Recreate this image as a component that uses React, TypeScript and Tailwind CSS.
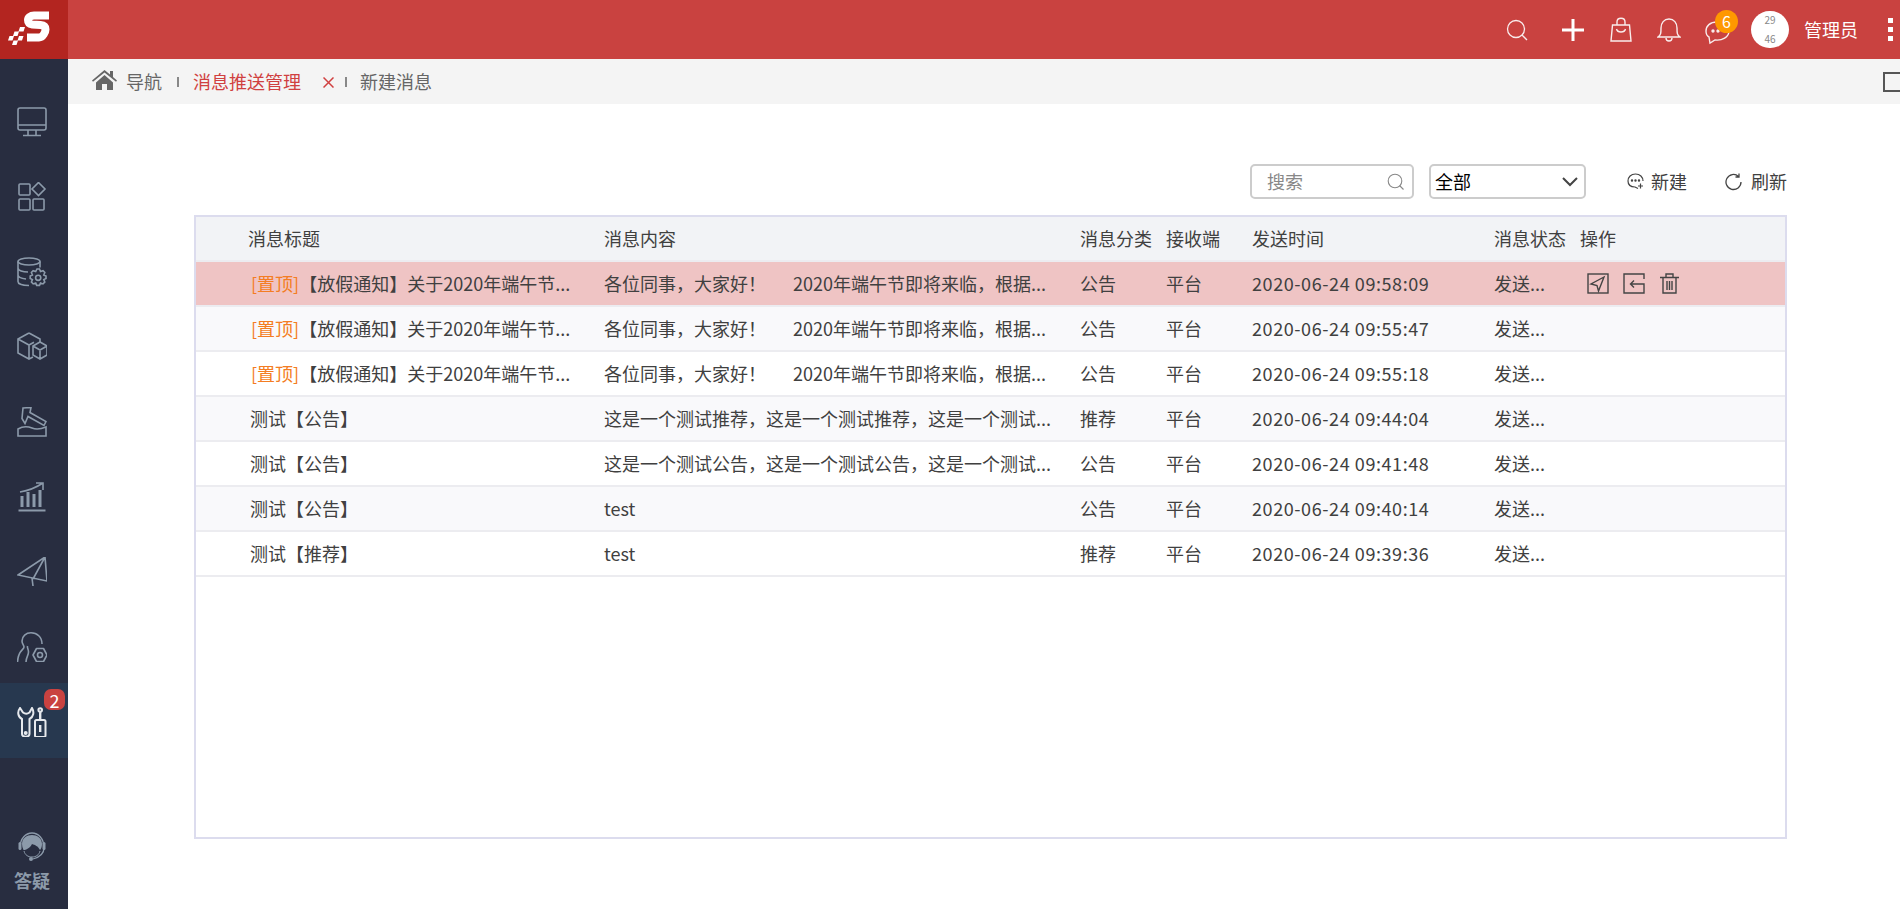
import React from "react";

const notice = "各位同事\uFF0C大家好\uFF01";
const holiday = "2020年端午节即将来临\uFF0C根据...";
const rows = [
  { top: true, title: "【放假通知】关于2020年端午节...", a: notice, b: holiday, cat: "公告", time: "2020-06-24 09:58:09", active: true },
  { top: true, title: "【放假通知】关于2020年端午节...", a: notice, b: holiday, cat: "公告", time: "2020-06-24 09:55:47" },
  { top: true, title: "【放假通知】关于2020年端午节...", a: notice, b: holiday, cat: "公告", time: "2020-06-24 09:55:18" },
  { title: "测试【公告】", a: "这是一个测试推荐\uFF0C这是一个测试推荐\uFF0C这是一个测试...", cat: "推荐", time: "2020-06-24 09:44:04" },
  { title: "测试【公告】", a: "这是一个测试公告\uFF0C这是一个测试公告\uFF0C这是一个测试...", cat: "公告", time: "2020-06-24 09:41:48" },
  { title: "测试【公告】", a: "test", cat: "公告", time: "2020-06-24 09:40:14" },
  { title: "测试【推荐】", a: "test", cat: "推荐", time: "2020-06-24 09:39:36" },
];

const S = ({ children, w = 30, h = 30, vb = "0 0 30 30", sw = 1.6, className = "" }: any) => (
  <svg width={w} height={h} viewBox={vb} fill="none" stroke="currentColor" strokeWidth={sw} className={className}>
    {children}
  </svg>
);

const sideIcons = [
  <S key="m"><rect x="1" y="1" width="28" height="22" rx="2" /><path d="M1 18h28M11 23v5M19 23v5M6 28.500h18" /></S>,
  <S key="a"><rect x="2" y="2" width="11" height="11" rx="1" /><rect x="2" y="17" width="11" height="11" rx="1" /><rect x="16" y="17" width="11" height="11" rx="1" /><path d="M21.500 0.500l6.500 6.500-6.500 6.500-6.500-6.500z" /></S>,
  <S key="d"><ellipse cx="12" cy="4.500" rx="11" ry="3.500" /><path d="M1 4.500v20c0 2.500 5 4 11 4M1 11c0 2.500 5 4 10 4M1 18c0 2 4 3.500 8 4M23 4.500v6" /><path d="M20 12l2.500 0 1 2.500 2.500-.8 1.800 1.800-1 2.500 2.200 1v2.600l-2.200 1 1 2.500-1.800 1.800-2.500-.8-1 2.300h-2.800l-1-2.300-2.500.8-1.800-1.800 1-2.500-2.200-1v-2.600l2.200-1-1-2.500 1.800-1.800 2.500.8z" /><circle cx="21.200" cy="20.800" r="2.600" /></S>,
  <S key="b"><path d="M12 1l11 6v3M12 1L1 7v14l11 6 4-2M1 7l11 6 5-2.700M12 13v14" /><path d="M23 10l7 4v9l-7 4-7-4v-9zM16 14l7 4 7-4M23 18v9" /></S>,
  <S key="h"><path d="M1 22c5-3 9-3 14-1s9 1 14-1v9H1z" /><path d="M6 1l8-.5-1 5 16 9-2 4-16-9-3 7-3-5z" /></S>,
  <S key="c"><path d="M3 10c6-1 14-3 23-9M19 1h7v7" /><path d="M1.500 28.500h27" strokeWidth="2" /><path d="M5 14v11M11 10v15M17 12v13M23 8v17" strokeWidth="3" /></S>,
  <S key="p"><path d="M1 18L28 0l2 24-29-6zM28 0L16 22M15 21l1 8" /></S>,
  <S key="u">
    <path d="M25 12C25 5 20 .8 14 .8 9 .8 5 4 5 9c0 3 2 4 2 6 0 3-6 3-6.500 15" />
    <path d="M9 30c0-5 2.500-6 2.500-10 0-3-1.500-4-1-6" />
    <path d="M19.500 16.500h7l3.500 6.500-3.500 6.500h-7L16 23z" strokeLinejoin="round" />
    <circle cx="23" cy="23" r="2.500" />
  </S>,
];

function Col({ children, className = "" }: any) {
  return <div className={`whitespace-nowrap ${className}`}>{children}</div>;
}

const cols = "grid grid-cols-[408px_476px_86px_86px_242px_86px_1fr] items-center";

export default function App() {
  return (
    <div className="flex flex-col h-[909px] w-[1900px] overflow-hidden bg-white font-['Noto_Sans_CJK_SC','Microsoft_YaHei',sans-serif] text-[18px] text-[#404040]">
      <header className="flex h-[59px] shrink-0 items-stretch bg-[#c94240]">
        <div className="flex w-[68px] items-center justify-center bg-[#b32520]">
          <svg width="68" height="59" viewBox="0 0 68 59" className="shrink-0">
            <path d="M49 15.500H34c-3.500 0-6 2-6 4.500s1.500 4 4.500 4.500l8 .6c3.500.3 5 2 5 4.400s-2.500 8-6.500 8H27" fill="none" stroke="#fff" strokeWidth="8" />
            <path d="M20 27h5l-1.500 4.500h-5zM14.500 31.500h4.500l-1.500 4.500H13zM9.500 36h4.500l-1.500 4.500H8zM19 36h4.500L22 40.500h-4.500zM13.500 40.500h4.500l-1.500 4.500H12z" fill="#fff" />
          </svg>
        </div>
        <div className="flex flex-1 items-center justify-end text-white">
          <S w={22} h={22} vb="0 0 22 22" sw={1.3} className="mr-[34px] opacity-90"><circle cx="10" cy="10" r="8.500" /><path d="M16 16l5 5" /></S>
          <S w={22} h={22} vb="0 0 22 22" sw={3} className="mr-[26px]"><path d="M0 11h22M11 0v22" /></S>
          <S w={22} h={25} vb="0 0 22 25" sw={1.4} className="mr-[25px] opacity-90"><path d="M2.500 8h17l1.500 16H1zM7 8V5c0-5 8-5 8 0v3M6.500 12c1 4 8 4 9 0" /></S>
          <S w={24} h={25} vb="0 0 24 25" sw={1.4} className="mr-[24px] opacity-90"><path d="M1 20c3-2 3-4 3-9 0-5 3-9 8-9s8 4 8 9c0 5 0 7 3 9zM9 21c0 4 6 4 6 0" /></S>
          <div className="relative mr-[21px] h-[26px] w-[25px]">
            <S w={25} h={26} vb="0 0 25 26" sw={1.4} className="absolute left-0 top-[3px] opacity-90"><path d="M12 2C5 2 1 6 1 11c0 3 1 5 3 6l1 6 5-3c7 1 14-3 14-9S18 2 12 2z" /><circle cx="8" cy="11" r="1" fill="currentColor" /><circle cx="13" cy="11" r="1" fill="currentColor" /></S>
            <div className="absolute left-[10px] top-[-7px] flex h-[23px] w-[23px] items-center justify-center rounded-full bg-[#ff9800] text-[16px] leading-none text-white">6</div>
          </div>
          <div className="mr-[15px] flex h-[37px] w-[38px] flex-col items-center justify-between rounded-full bg-white py-[4px] text-[10px] leading-none text-[#888]">
            <span>29</span>
            <span>46</span>
          </div>
          <span className="mb-[2px] mr-[30px] leading-none">管理员</span>
          <div className="mr-[7px] flex flex-col gap-[4px]">
            <i className="block size-[5px] bg-white" />
            <i className="block size-[5px] bg-white" />
            <i className="block size-[5px] bg-white" />
          </div>
        </div>
      </header>

      <div className="flex min-h-0 flex-1">
        <aside className="flex w-[68px] shrink-0 flex-col bg-[#282d40] pt-[24px] text-[#8c9aaa]">
          {sideIcons.map((ic, i) => (
            <div key={i} className="flex h-[75px] items-center justify-center pr-[4px] pt-[2px]">{ic}</div>
          ))}
          <div className="relative flex h-[75px] items-center justify-center bg-[#27384f] pr-[4px] pt-[2px] text-[#e6e9ed]">
            <S sw={2}>
              <path d="M3 1C0 5 1 10 5 12v15c0 3.500 7.500 3.500 7.500 0V12c4-2 5-7 2.500-11l-2.500 4.500c-2 1.500-4.500 1.500-6.500 0z" />
              <circle cx="8.700" cy="26" r="1" />
              <rect x="18" y="13" width="10.500" height="17" rx="1.500" />
              <path d="M23.200 5v8M23.200 18v7" strokeWidth="2.400" />
              <circle cx="23.200" cy="3" r="1.800" />
            </S>
            <div className="absolute left-[44px] top-[6px] flex h-[21px] w-[21px] items-center justify-center rounded-[7px] bg-[#c94240] text-[18px] leading-none text-white">2</div>
          </div>
          <div className="mt-auto flex flex-col items-center pb-[20px] pr-[4px]">
            <svg width="28" height="30" viewBox="0 0 28 30" fill="#8c9aaa">
              <path d="M2 17C2-3 26-3 26 17c0 6-4 9-11 11" fill="none" stroke="#8c9aaa" strokeWidth="1.300" />
              <path d="M4 13C4 1 24 1 24 13c0 3-1 5-2 6-2-4-5-5-8-6-2 4-6 6-8.500 6C4.500 17 4 15 4 13z" />
              <rect x="0.500" y="11" width="3" height="8" rx="1.500" />
              <rect x="24.500" y="11" width="3" height="8" rx="1.500" />
              <path d="M6 20c1 4 4 6 8 6s7-2 8-6" fill="none" stroke="#8c9aaa" strokeWidth="1" />
              <circle cx="13" cy="28" r="2" />
            </svg>
            <span className="mt-[10px] font-bold leading-none text-[#8c9aaa]">答疑</span>
          </div>
        </aside>

        <main className="min-w-0 flex-1">
          <nav className="flex h-[45px] items-center bg-[#f4f4f4] pl-[24px] text-[#666]">
            <svg width="25" height="20" viewBox="0 0 25 20" fill="#666" className="mb-[4px]">
              <path d="M12.500 0L0 10.500l1 1.200L12.500 2.500 24 11.700l1-1.200-4-3.500V1h-3v3.500z" />
              <path d="M4 12.500L12.500 5 21 12.500V20h-6v-6h-5v6H4z" />
            </svg>
            <span className="mb-[2px] ml-[9px] leading-none">导航</span>
            <i className="ml-[15px] h-[10px] w-[2px] bg-[#888]" />
            <span className="mb-[2px] ml-[14px] leading-none text-[#d04040]">消息推送管理</span>
            <svg width="11" height="11" viewBox="0 0 11 11" stroke="#d04040" strokeWidth="1.500" className="ml-[22px] mt-[2px]"><path d="M0.500 0.500l10 10M10.500 0.500l-10 10" /></svg>
            <i className="ml-[11px] h-[10px] w-[2px] bg-[#888]" />
            <span className="mb-[2px] ml-[13px] leading-none">新建消息</span>
            <div className="ml-auto h-[20px] w-[17px] border-y-2 border-l-2 border-[#555]" />
          </nav>

          <section className="flex items-center justify-end pr-[113px] pt-[60px]">
            <div className="flex h-[35px] w-[164px] items-center justify-between rounded-[5px] border-2 border-[#ccc] pl-[15px] pr-[8px] text-[#888]">
              <span className="mb-[2px] leading-none">搜索</span>
              <S w={17} h={17} vb="0 0 17 17" sw={1.1}><circle cx="8" cy="8" r="6.800" /><path d="M12.500 12.500l4 4" /></S>
            </div>
            <div className="ml-[15px] flex h-[35px] w-[157px] items-center justify-between rounded-[5px] border-2 border-[#ccc] pl-[4px] pr-[6px] text-black">
              <span className="mb-[2px] leading-none">全部</span>
              <S w={16} h={10} vb="0 0 16 10" sw={2} className="text-[#444]"><path d="M1 1l7 7 7-7" /></S>
            </div>
            <S w={17} h={17} vb="0 0 17 17" sw={1.2} className="ml-[41px] text-[#444]">
              <path d="M11 15.500L8 14C4 14 1 12 1 8s3-7 7.500-7S16 4 16 8" />
              <circle cx="5" cy="7.500" r=".6" fill="currentColor" /><circle cx="8.500" cy="7.500" r=".6" fill="currentColor" /><circle cx="12" cy="7.500" r=".6" fill="currentColor" />
              <path d="M11 13h5M13.500 10.500v5" />
            </S>
            <span className="mb-[1px] ml-[7px] leading-none">新建</span>
            <S w={18} h={18} vb="0 0 18 18" sw={1.3} className="ml-[38px] text-[#444]"><path d="M16 9a7.500 7.500 0 1 1-2.500-5.600M14 0.500v3.500h-3.500" /></S>
            <span className="mb-[1px] ml-[8px] leading-none">刷新</span>
          </section>

          <section className="ml-[126px] mt-[16px] flex h-[624px] w-[1593px] flex-col border-2 border-[#dcdcee]">
            <div className={`${cols} h-[45px] shrink-0 border-b-2 border-[#ececf0] bg-[#f2f3f6]`}>
              <Col className="pl-[52px]">消息标题</Col>
              <Col>消息内容</Col>
              <Col>消息分类</Col>
              <Col>接收端</Col>
              <Col>发送时间</Col>
              <Col>消息状态</Col>
              <Col>操作</Col>
            </div>
            {rows.map((r, i) => (
              <div
                key={i}
                className={`${cols} h-[45px] shrink-0 border-b-2 border-[#ececf0] ${r.active ? "bg-[#efc4c4]" : i % 2 === 1 ? "bg-[#f9f9fb]" : "bg-white"}`}
              >
                <Col className={r.top ? "pl-[55px]" : "pl-[54px]"}>
                  {r.top && <span className="text-[#f47d22]">[置顶]</span>}
                  {r.title}
                </Col>
                <Col>
                  {r.a}
                  {r.b && <span className="ml-[27px]">{r.b}</span>}
                </Col>
                <Col>{r.cat}</Col>
                <Col>平台</Col>
                <Col className="tracking-[0.58px]">{r.time}</Col>
                <Col>发送...</Col>
                <Col>
                  {r.active && (
                    <div className="flex items-center pl-[7px] text-[#444]">
                      <S w={22} h={21} vb="0 0 22 21" sw={1.4}><rect x="1" y="1" width="20" height="19" /><path d="M17 4L4 11l6 1.500 1.500 5.500z" /></S>
                      <S w={22} h={21} vb="0 0 22 21" sw={1.4} className="ml-[14px]"><path d="M21 6V1H1v19h20v-9H8M11 7.500L7.500 11l3.500 3.500" /></S>
                      <S w={19} h={21} vb="0 0 19 21" sw={1.4} className="ml-[15px]"><path d="M0 4.500h19M3 4.500V20h13V4.500M6 4V1h7v3M7 8v9M9.500 8v9M12 8v9" /></S>
                    </div>
                  )}
                </Col>
              </div>
            ))}
          </section>
        </main>
      </div>
    </div>
  );
}
